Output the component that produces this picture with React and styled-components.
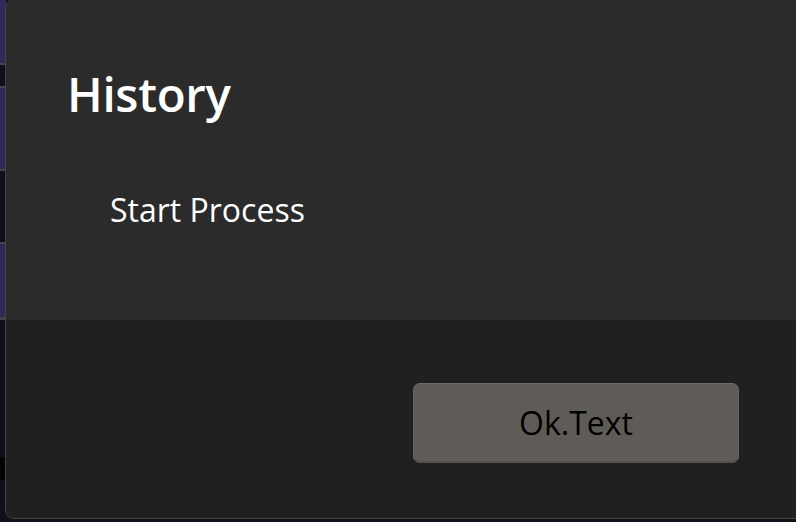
import React from "react";
import styled, { createGlobalStyle } from "styled-components";

const Global = createGlobalStyle`
  html, body { margin: 0; padding: 0; background: #11111c; overflow: hidden; }
  body { font-family: "Open Sans", "Noto Sans", sans-serif; }
`;

const Screen = styled.div`
  display: flex;
  width: 796px;
  height: 522px;
  overflow: hidden;
  background: #11111c;
`;

const Strip = styled.div`
  display: flex;
  flex-direction: column;
  width: 6px;
  flex: none;
`;

const Band = styled.div`
  height: ${(p) => p.h}px;
  flex: none;
  background: ${(p) =>
    p.kind === "purple" ? "#2f2a5c" : p.kind === "line" ? "#45454c" : p.kind === "black" ? "#040404" : "#10101a"};
`;

const Dialog = styled.div`
  flex: none;
  width: 830px;
  height: 518px;
  margin-top: -1px;
  margin-left: -1px;
  border: 1px solid #444444;
  border-radius: 9px;
  overflow: hidden;
  display: flex;
  flex-direction: column;
  background: #2b2b2b;
`;

const Content = styled.div`
  height: 320px;
  flex: none;
  box-sizing: border-box;
  padding: 62px 0 0 61px;
  background: #2b2b2b;
  color: #ffffff;
`;

const Title = styled.h1`
  margin: 0;
  font-weight: 600;
  font-size: 47.5px;
  line-height: 64px;
  letter-spacing: -0.3px;
`;

const Item = styled.div`
  margin: 62px 0 0 43px;
  font-size: 32px;
  line-height: 44px;
  font-weight: 400;
`;

const Footer = styled.div`
  flex: 1;
  background: #202020;
  display: flex;
  padding: 63px 0 0 407px;
  box-sizing: border-box;
`;

const Button = styled.button`
  width: 326px;
  height: 80px;
  box-sizing: border-box;
  border-radius: 7px;
  border: 1px solid #6a6762;
  border-top-color: #6e6b66;
  border-bottom-color: #55524e;
  border-bottom-width: 2px;
  background: #5f5c57;
  color: #000;
  font-family: "Open Sans", "Noto Sans", sans-serif;
  font-size: 32px;
  padding: 0 0 0;
  cursor: pointer;
`;

const bands = [
  ["purple", 63], ["line", 2], ["navy", 21], ["line", 2], ["purple", 81], ["line", 2],
  ["navy", 71], ["line", 2], ["purple", 73], ["line", 3], ["navy", 137], ["black", 23], ["navy", 42],
];

export default function App() {
  return (
    <>
      <Global />
      <Screen>
        <Strip>
          {bands.map(([k, h], i) => (
            <Band key={i} kind={k} h={h} />
          ))}
        </Strip>
        <Dialog>
          <Content>
            <Title>History</Title>
            <Item>Start Process</Item>
          </Content>
          <Footer>
            <Button>Ok.Text</Button>
          </Footer>
        </Dialog>
      </Screen>
    </>
  );
}
